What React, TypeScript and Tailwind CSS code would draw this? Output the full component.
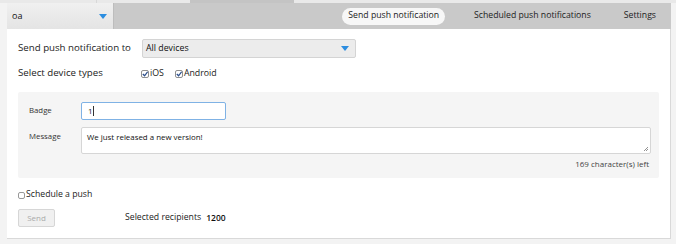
import { useState } from 'react'

function Arrow() {
  return (
    <svg width="8" height="5" viewBox="0 0 8 5" className="shrink-0">
      <path d="M0 0 L8 0 L4 5 Z" fill="#2b8de0" />
    </svg>
  )
}

function Check({ checked }: { checked: boolean }) {
  return (
    <span className="inline-flex w-[8px] h-[8px] border border-[#8f8f8f] rounded-[2px] bg-white items-center justify-center mr-[1px]">
      {checked && (
        <svg width="6" height="6" viewBox="0 0 6 6">
          <path d="M0.8 3 L2.6 4.8 L5.6 0.8" stroke="#2d4f8c" strokeWidth="1.3" fill="none" />
        </svg>
      )}
    </span>
  )
}

export default function App() {
  const [ios, setIos] = useState(true)
  const [android, setAndroid] = useState(true)
  const [message] = useState('We just released a new version!')

  return (
    <div className="w-[676px] h-[244px] bg-[#f3f3f3] overflow-hidden text-[#222] whitespace-nowrap" style={{ fontFamily: '"Open Sans", sans-serif' }}>
      {/* cut-off row above */}
      <div className="h-[3px] flex bg-[#e9e9e9]">
        <div className="w-[97px] border-r border-[#d8d8d8]" />
        <div className="w-[93px]" />
        <div className="w-[104px] bg-[#c4c4c4]" />
      </div>

      {/* Header */}
      <div className="ml-[7px] mr-[5px] h-[26px] flex items-center bg-[#c9c9c9]">
        <div className="w-[107px] h-full flex items-center justify-between pl-[5px] pr-[6px] bg-gradient-to-b from-[#f0f0f0] to-[#e4e4e4] border-r border-[#bdbdbd]">
          <span className="text-[9px] text-[#111]">oa</span>
          <Arrow />
        </div>
        <div className="flex-1" />
        <div className="flex items-center text-[8.7px] text-[#222]">
          <span className="px-[6px] h-[17px] flex items-center bg-[#f7f7f7] rounded-full mr-[29px]">Send push notification</span>
          <span className="mr-[33px]">Scheduled push notifications</span>
          <span className="mr-[15px]">Settings</span>
        </div>
      </div>

      {/* Panel */}
      <div className="ml-[7px] mr-[5px] h-[210px] bg-white border-r border-b border-[#d9d9d9] px-[11px] pt-[10px]">
        <div className="flex items-center h-[19px]">
          <span className="w-[124px] text-[9.7px] text-[#222]">Send push notification to</span>
          <div className="w-[214px] h-[19px] bg-[#ececec] border border-[#d4d4d4] rounded-[2px] flex items-center justify-between px-[3px] pr-[6px]">
            <span className="text-[8.8px] text-[#111]">All devices</span>
            <Arrow />
          </div>
        </div>
        <div className="flex items-center h-[15px] mt-[8px]">
          <span className="w-[123px] text-[9.7px] text-[#222]">Select device types</span>
          <label className="flex items-center text-[8.8px] mr-[11px]" onClick={() => setIos(!ios)}>
            <Check checked={ios} />iOS
          </label>
          <label className="flex items-center text-[8.8px]" onClick={() => setAndroid(!android)}>
            <Check checked={android} />Android
          </label>
        </div>

        {/* Message form */}
        <div className="mt-[11px] h-[86px] bg-[#f5f5f5] rounded-[2px] pl-[11px] pr-[8px] pt-[10px]">
          <div className="flex items-center">
            <span className="w-[52px] text-[7.8px] text-[#333]">Badge</span>
            <div className="w-[145px] h-[18px] bg-white border border-[#7fb2e5] rounded-[2px] flex items-center px-[6px] text-[8px]">
              1<span className="w-px h-[10px] bg-[#333]" />
            </div>
          </div>
          <div className="flex items-start mt-[7px]">
            <span className="w-[52px] text-[7.8px] text-[#333] pt-[4px]">Message</span>
            <div className="relative flex-1 h-[27px] bg-white border border-[#d6d6d6] rounded-[2px] px-[5px] pt-[4px] text-[7.9px] text-[#111]">
              {message}
              <svg className="absolute right-[2px] bottom-[2px]" width="4" height="4" viewBox="0 0 4 4">
                <path d="M4 0 L0 4 M4 2 L2 4" stroke="#777" strokeWidth="0.8" />
              </svg>
            </div>
          </div>
          <div className="text-right text-[8px] text-[#444] mt-[4px] pr-[2px]">169 character(s) left</div>
        </div>

        <label className="flex items-center h-[14px] mt-[10px] text-[8.7px] text-[#222]">
          <span className="w-[7px] h-[7px] border border-[#999] rounded-[2px] bg-white mr-[1px]" />Schedule a push
        </label>
        <div className="flex items-center mt-[7px]">
          <button disabled className="w-[37px] h-[18px] text-[8px] text-[#aaa] bg-[#f0f0f0] border border-[#d6d6d6] rounded-[2px]">Send</button>
          <span className="ml-[70px] text-[8.7px] text-[#222]">Selected recipients</span>
          <span className="ml-[5px] text-[8.5px] font-semibold text-[#111]">1200</span>
        </div>
      </div>
    </div>
  )
}
